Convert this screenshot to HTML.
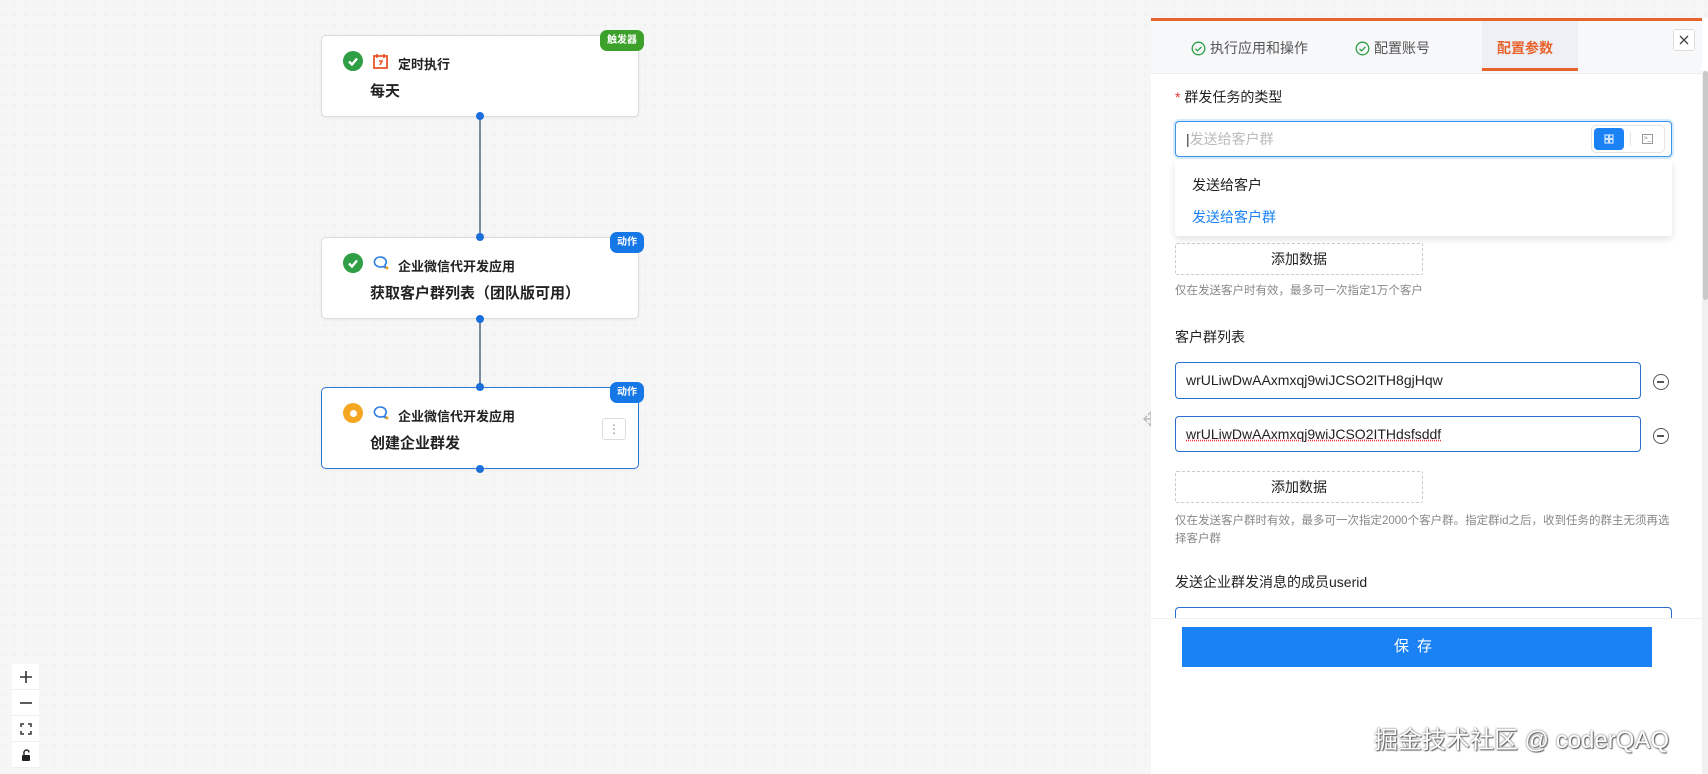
<!DOCTYPE html>
<html><head><meta charset="utf-8"><style>
*{box-sizing:border-box;margin:0;padding:0}
body{width:1708px;height:774px;overflow:hidden;position:relative;font-family:"Liberation Sans","Noto Sans CJK SC",sans-serif;color:#222;
background-color:#f6f6f6;background-image:radial-gradient(#ebebeb 0.7px,transparent 1px);background-size:10px 10px}
.abs{position:absolute}
.node{position:absolute;left:321px;width:318px;height:82px;background:#fff;border:1px solid #dcdcdc;border-radius:5px;box-shadow:0 1px 3px rgba(0,0,0,.06)}
.node .ttl{position:absolute;left:76px;top:18px;font-size:13px;font-weight:bold;color:#222}
.node .sub{position:absolute;left:48px;top:44px;font-size:15px;font-weight:bold;color:#222}
.chk{position:absolute;left:21px;top:15px;width:20px;height:20px;border-radius:50%;background:#2f9e44}
.badge{position:absolute;right:-6px;top:-6px;height:21px;padding:0 7px;border-radius:7px;color:#fff;font-size:10px;font-weight:bold;line-height:21px}
.dot{position:absolute;left:476px;width:8px;height:8px;border-radius:50%;background:#1a6fdb}
.line{position:absolute;left:479px;width:2px;background:#7a8ba0}
.ico{position:absolute;left:50px;top:17px}
.panel{position:absolute;left:1151px;top:18px;width:557px;height:756px;background:#fff}
.tabs{position:absolute;left:0;top:0;width:551px;height:53px;background:#f7f8fa;border-bottom:1px solid #eee}
.tab{position:absolute;top:17px;font-size:14px;color:#555}
.tab svg{vertical-align:-3px;margin-right:4px}
.lbl{position:absolute;left:24px;font-size:14px;color:#222}
.inp{position:absolute;left:24px;border:1px solid #2a6fd0;border-radius:4px;background:#fff;font-size:14px;padding-left:10px}
.add{position:absolute;left:24px;width:248px;height:32px;border:1px dashed #ccc;border-radius:2px;text-align:center;line-height:30px;font-size:14px;color:#222}
.hint{position:absolute;left:24px;font-size:11.5px;color:#888;line-height:18px}
.minus{position:absolute;left:502px;width:16px;height:16px;border:1.5px solid #555;border-radius:50%}
.minus:after{content:"";position:absolute;left:3px;top:6px;width:7px;height:1.5px;background:#555}
.zc{position:absolute;left:12px;width:27px;height:26px;background:#fff;border-bottom:1px solid #eee;display:flex;align-items:center;justify-content:center}
</style></head><body>

<div class="line" style="top:117px;height:120px"></div>
<div class="line" style="top:319px;height:68px"></div>

<div class="node" style="top:35px">
  <div class="chk"><svg width="20" height="20"><path d="M6 10.5l3 3 5-6" fill="none" stroke="#fff" stroke-width="2.4"/></svg></div>
  <svg class="ico" width="17" height="17" viewBox="0 0 17 17"><rect x="2" y="3" width="13" height="12" fill="none" stroke="#e8552a" stroke-width="1.8"/><path d="M5 1v4M12 1v4M7 8h3l-2 4" fill="none" stroke="#e8552a" stroke-width="1.6"/></svg>
  <div class="ttl">定时执行</div>
  <div class="sub">每天</div>
  <div class="badge" style="background:#3ba12a">触发器</div>
</div>
<div class="node" style="top:237px">
  <div class="chk"><svg width="20" height="20"><path d="M6 10.5l3 3 5-6" fill="none" stroke="#fff" stroke-width="2.4"/></svg></div>
  <svg class="ico" width="18" height="17" viewBox="0 0 18 17"><path d="M8 2a6 5 0 1 0 3 9.5l3 1.5-1-3A6 5 0 0 0 8 2z" fill="none" stroke="#2b7de0" stroke-width="1.6"/><circle cx="15" cy="13" r="1.5" fill="#f2a21c"/></svg>
  <div class="ttl">企业微信代开发应用</div>
  <div class="sub">获取客户群列表（团队版可用）</div>
  <div class="badge" style="background:#1677e6">动作</div>
</div>
<div class="node" style="top:387px;border:1px solid #2a7ad8">
  <div class="chk" style="background:#f5a623"><span style="position:absolute;left:6.5px;top:6.5px;width:7px;height:7px;border-radius:50%;background:#fff"></span></div>
  <svg class="ico" width="18" height="17" viewBox="0 0 18 17"><path d="M8 2a6 5 0 1 0 3 9.5l3 1.5-1-3A6 5 0 0 0 8 2z" fill="none" stroke="#2b7de0" stroke-width="1.6"/><circle cx="15" cy="13" r="1.5" fill="#f2a21c"/></svg>
  <div class="ttl">企业微信代开发应用</div>
  <div class="sub">创建企业群发</div>
  <div class="badge" style="background:#1677e6">动作</div>
  <div class="abs" style="left:280px;top:30px;width:24px;height:22px;border:1px solid #ddd;border-radius:3px;text-align:center;line-height:20px;color:#888;font-size:12px">⋮</div>
</div>
<div class="dot" style="top:112px"></div>
<div class="dot" style="top:233px"></div>
<div class="dot" style="top:315px"></div>
<div class="dot" style="top:383px"></div>
<div class="dot" style="top:465px"></div>

<div class="zc" style="top:664px"><svg width="14" height="14"><path d="M7 1v12M1 7h12" stroke="#333" stroke-width="1.6"/></svg></div>
<div class="zc" style="top:690px"><svg width="14" height="14"><path d="M1 7h12" stroke="#333" stroke-width="1.6"/></svg></div>
<div class="zc" style="top:716px"><svg width="12" height="12"><path d="M1 4V1h3M8 1h3v3M11 8v3H8M4 11H1V8" fill="none" stroke="#333" stroke-width="1.5"/></svg></div>
<div class="zc" style="top:742px"><svg width="12" height="12"><path d="M4 6V3.5a2.5 2.5 0 0 1 5 0" fill="none" stroke="#222" stroke-width="1.4"/><rect x="2" y="6" width="8" height="6" rx="1" fill="#222"/></svg></div>

<svg class="abs" style="left:1142px;top:410px" width="18" height="18"><path d="M2 9h14M9 2v14M5 6l-3 3 3 3M13 6l3 3-3 3M6 5l3-3 3 3M6 13l3 3 3-3" fill="none" stroke="#bbb" stroke-width="1.4"/></svg>

<div class="panel">
  <div class="abs" style="left:0;top:0;width:551px;height:3px;background:#e8632c"></div>
  <div class="tabs" style="top:3px">
    <div class="tab" style="left:40px"><svg width="15" height="15"><circle cx="7.5" cy="7.5" r="6.3" fill="none" stroke="#2f9e44" stroke-width="1.3"/><path d="M4.5 7.8l2 2 4-4" fill="none" stroke="#2f9e44" stroke-width="1.3"/></svg>执行应用和操作</div>
    <div class="tab" style="left:204px"><svg width="15" height="15"><circle cx="7.5" cy="7.5" r="6.3" fill="none" stroke="#2f9e44" stroke-width="1.3"/><path d="M4.5 7.8l2 2 4-4" fill="none" stroke="#2f9e44" stroke-width="1.3"/></svg>配置账号</div>
    <div class="abs" style="left:331px;top:0;width:96px;height:50px;background:#eef0f6;border-bottom:3px solid #e8632c"></div>
    <div class="tab" style="left:346px;color:#e8632c;font-weight:bold">配置参数</div>
    <div class="abs" style="left:522px;top:8px;width:22px;height:22px;border:1px solid #ddd;border-radius:3px;background:#fff"><svg width="20" height="20"><path d="M6 6l8 8M14 6l-8 8" stroke="#444" stroke-width="1.3"/></svg></div>
  </div>
  <div class="abs" style="left:551px;top:53px;width:6px;height:703px;background:#f0f0f0"></div>
  <div class="abs" style="left:552px;top:53px;width:5px;height:229px;background:#c9c9c9;border-radius:3px"></div>

  <div class="lbl" style="top:69px"><span style="color:#e33">*</span> 群发任务的类型</div>
  <div class="inp" style="top:103px;width:497px;height:36px;line-height:34px;color:#bbb;border-color:#3a94ea;box-shadow:0 0 0 2px #d8ebfc"><span style="color:#333">|</span>发送给客户群
    <div class="abs" style="right:6px;top:3px;width:74px;height:28px;border:1px solid #e4e4e4;border-radius:5px;background:#fff">
      <div class="abs" style="left:2px;top:2px;width:30px;height:22px;background:#1a82f5;border-radius:4px"><svg width="30" height="22"><g fill="none" stroke="#cfe3ff" stroke-width="1.2"><rect x="11" y="7" width="3.5" height="3.5"/><rect x="15.5" y="7" width="3.5" height="3.5"/><rect x="11" y="11.5" width="3.5" height="3.5"/><rect x="15.5" y="11.5" width="3.5" height="3.5"/></g></svg></div>
      <div class="abs" style="left:38px;top:6px;width:1px;height:14px;background:#e4e4e4"></div>
      <div class="abs" style="left:50px;top:8px;width:11px;height:10px;border:1px solid #999;font-size:6px;line-height:8px;color:#777;padding-left:1px">&gt;_</div>
    </div>
  </div>
  <div class="abs" style="left:24px;top:142px;width:497px;height:76px;background:#fff;box-shadow:0 3px 8px rgba(0,0,0,.12);border-radius:3px">
    <div class="abs" style="left:17px;top:15px;font-size:14px">发送给客户</div>
    <div class="abs" style="left:17px;top:47px;font-size:14px;color:#1a82f5">发送给客户群</div>
  </div>
  <div class="add" style="top:225px">添加数据</div>
  <div class="hint" style="top:264px">仅在发送客户时有效，最多可一次指定1万个客户</div>

  <div class="lbl" style="top:309px">客户群列表</div>
  <div class="inp" style="top:344px;width:466px;height:37px;line-height:35px">wrULiwDwAAxmxqj9wiJCSO2ITH8gjHqw</div>
  <div class="minus" style="top:356px"></div>
  <div class="inp" style="top:398px;width:466px;height:36px;line-height:34px"><span style="text-decoration:underline dotted #e33">wrULiwDwAAxmxqj9wiJCSO2ITHdsfsddf</span></div>
  <div class="minus" style="top:410px"></div>
  <div class="add" style="top:453px">添加数据</div>
  <div class="hint" style="top:494px;width:505px">仅在发送客户群时有效，最多可一次指定2000个客户群。指定群id之后，收到任务的群主无须再选择客户群</div>

  <div class="lbl" style="top:554px">发送企业群发消息的成员userid</div>
  <div class="inp" style="top:589px;width:497px;height:20px;border-bottom:none;border-radius:4px 4px 0 0"></div>
  <div class="abs" style="left:0;top:600px;width:551px;height:156px;background:#fff;border-top:1px solid #eee"></div>
  <div class="abs" style="left:31px;top:609px;width:470px;height:40px;background:#1a82f5;color:#fff;font-size:15px;text-align:center;line-height:40px;letter-spacing:8px">保存</div>
  <div class="abs" style="left:223px;top:702px;font-size:24px;color:#fff;text-shadow:0 0 2px #555,1px 1px 1px #666">掘金技术社区 @ coderQAQ</div>
</div>
</body></html>
